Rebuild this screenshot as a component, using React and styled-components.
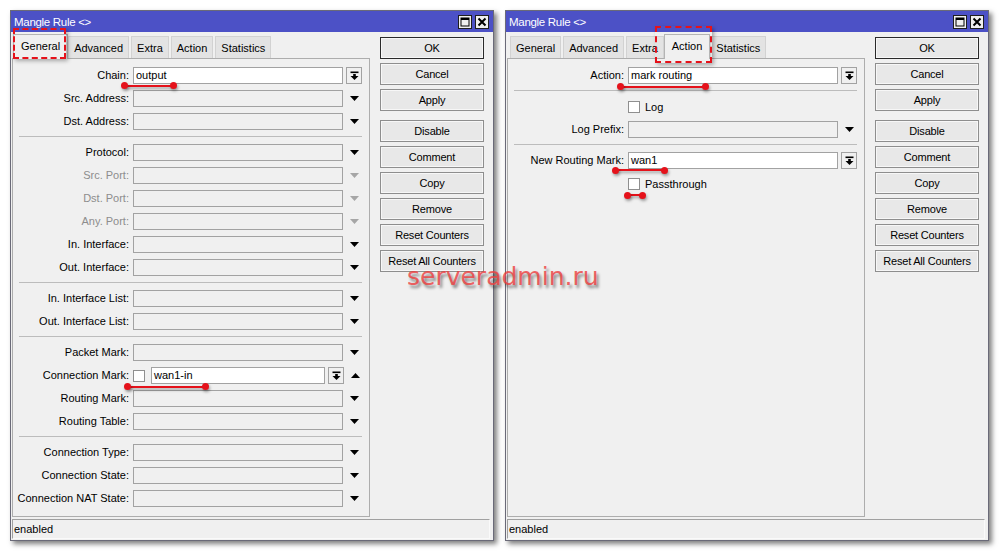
import styled, { createGlobalStyle, css } from "styled-components";

const GlobalStyle = createGlobalStyle`
  html, body {
    margin: 0;
    padding: 0;
    background: #ffffff;
  }
  body {
    font-family: "Liberation Sans", Arial, sans-serif;
    font-size: 11px;
    color: #000;
  }
`;

const Stage = styled.div`
  position: relative;
  width: 1000px;
  height: 553px;
  box-sizing: border-box;
  padding: 10px 0 0 10px;
  display: flex;
  align-items: flex-start;
  gap: 11px;
  overflow: hidden;
`;

const Window = styled.div`
  width: 484px;
  height: 531px;
  box-sizing: border-box;
  border: 1px solid #6a6a78;
  background: #f0f0f0;
  display: flex;
  flex-direction: column;
  box-shadow: 3px 3px 5px rgba(0, 0, 0, 0.5);
`;

const TitleBar = styled.div`
  flex: none;
  height: 21px;
  background: #4c51c6;
  color: #fff;
  display: flex;
  align-items: center;
  padding: 0 4px 0 3px;
`;

const TitleText = styled.span`
  flex: 1;
  font-size: 11.5px;
  letter-spacing: -0.3px;
`;

const TitleButton = styled.span`
  width: 14px;
  height: 14px;
  box-sizing: border-box;
  margin-left: 3px;
  border: 1px solid #1e1e1e;
  background: #efefef;
  display: flex;
  align-items: center;
  justify-content: center;
`;

const WindowBody = styled.div`
  flex: 1;
  min-height: 0;
  display: flex;
  padding: 0 9px 0 1px;
`;

const MainColumn = styled.div`
  width: 358px;
  display: flex;
  flex-direction: column;
`;

const TabStrip = styled.div`
  flex: none;
  height: 26px;
  display: flex;
  align-items: flex-end;
  padding-left: 3px;
  position: relative;
  z-index: 1;
`;

const Tab = styled.div`
  height: 22px;
  box-sizing: border-box;
  padding: 0 5px;
  margin-right: 2px;
  display: flex;
  align-items: center;
  justify-content: center;
  border: 1px solid #d2d2d2;
  border-bottom: none;
  background: #e3e3e3;
  white-space: nowrap;

  ${(p) =>
    p.$active &&
    css`
      height: 25px;
      margin: 0 0 -1px -2px;
      padding: 0 7px 2px;
      background: #f0f0f0;
      border-color: #b4b4b4;
      position: relative;
      z-index: 2;
    `}
`;

const Panel = styled.div`
  flex: 1;
  border: 1px solid #adadad;
  padding-top: 5px;
`;

const Row = styled.div`
  height: 23px;
  display: flex;
  align-items: center;
`;

const Label = styled.div`
  width: 116px;
  margin-right: 4px;
  text-align: right;
  white-space: nowrap;
  line-height: 14px;
  padding-bottom: 1px;
  color: ${(p) => (p.$disabled ? "#8d8d8d" : "#000")};
`;

const Field = styled.div`
  width: ${(p) => p.$width || 210}px;
  height: 17px;
  box-sizing: border-box;
  margin-left: ${(p) => p.$offset || 0}px;
  border: 1px solid #a2a2a2;
  background: ${(p) => (p.$white ? "#ffffff" : "#f0f0f0")};
  padding-left: 2px;
  line-height: 14px;
  white-space: nowrap;
`;

const Arrow = styled.svg`
  margin-left: 7px;
  flex: none;
`;

const ComboButton = styled.div`
  width: 16px;
  height: 17px;
  box-sizing: border-box;
  margin-left: 3px;
  border: 1px solid #a2a2a2;
  background: #f0f0f0;
  display: flex;
  align-items: center;
  justify-content: center;
`;

const CheckBox = styled.span`
  width: 12px;
  height: 12px;
  box-sizing: border-box;
  margin-left: ${(p) => p.$indent || 0}px;
  border: 1px solid #8f8f8f;
  background: #fff;
  flex: none;
`;

const CheckText = styled.span`
  margin-left: 5px;
`;

const Separator = styled.div`
  height: 1px;
  margin: 3px 7px 4px 6px;
  background: #bcbcbc;
`;

const ButtonColumn = styled.div`
  width: 104px;
  margin-left: 10px;
  padding-top: 5px;
  display: flex;
  flex-direction: column;
  gap: 4px;
`;

const Button = styled.div`
  height: 22px;
  box-sizing: border-box;
  border: 1px solid ${(p) => (p.$default ? "#2a2a2a" : "#8e8e8e")};
  box-shadow: inset 0 0 0 1px #f7f7f7;
  background: #e8e8e8;
  display: flex;
  align-items: center;
  justify-content: center;
  letter-spacing: -0.2px;
  margin-top: ${(p) => (p.$spaced ? 5 : 0)}px;
`;

const StatusBar = styled.div`
  flex: none;
  height: 20px;
  box-sizing: border-box;
  margin: 2px 3px 1px 1px;
  border-top: 1px solid #a0a0a0;
  border-left: 1px solid #a0a0a0;
  border-right: 1px solid #fafafa;
  border-bottom: 1px solid #fafafa;
  padding-left: 1px;
  display: flex;
  align-items: center;
`;

/* overlays: annotation marks drawn over the screenshot */
const MarkLine = styled.div`
  position: absolute;
  left: ${(p) => p.$x}px;
  top: ${(p) => p.$y - 1}px;
  width: ${(p) => p.$w}px;
  height: 2px;
  background: #e5121b;
  box-shadow: 1px 2px 3px rgba(0, 0, 0, 0.35);

  &::before,
  &::after {
    content: "";
    position: absolute;
    top: -2.5px;
    width: 7px;
    height: 7px;
    border-radius: 50%;
    background: #e5121b;
    box-shadow: 1px 2px 3px rgba(0, 0, 0, 0.35);
  }
  &::before {
    left: -3.5px;
  }
  &::after {
    right: -3.5px;
  }
`;

const DashBox = styled.div`
  position: absolute;
  left: ${(p) => p.$x}px;
  top: ${(p) => p.$y}px;
  width: ${(p) => p.$w}px;
  height: ${(p) => p.$h}px;
  box-sizing: border-box;
  border: 2px dashed #e5121b;
  box-shadow: 2px 2px 4px rgba(0, 0, 0, 0.3);
  z-index: 5;
`;

const Watermark = styled.div`
  position: absolute;
  left: 407px;
  top: 270px;
  font-family: "DejaVu Sans", Verdana, sans-serif;
  font-size: 25px;
  line-height: 14px;
  color: rgba(238, 60, 60, 0.8);
  text-shadow: 2px 3px 3px rgba(0, 0, 0, 0.45);
  z-index: 5;
`;

const DownArrow = ({ color = "#000" }) => (
  <Arrow width="9" height="5" viewBox="0 0 9 5">
    <path d="M0 0h9L4.5 5z" fill={color} />
  </Arrow>
);

const UpArrow = () => (
  <Arrow width="9" height="5" viewBox="0 0 9 5">
    <path d="M0 5h9L4.5 0z" fill="#000" />
  </Arrow>
);

const Combo = () => (
  <ComboButton>
    <svg width="9" height="10" viewBox="0 0 9 10">
      <rect x="0.5" y="0.5" width="8" height="1.6" fill="#000" />
      <rect x="3.2" y="3" width="2.6" height="2.2" fill="#000" />
      <path d="M0.5 5h8L4.5 9z" fill="#000" />
    </svg>
  </ComboButton>
);

const MaxIcon = () => (
  <svg width="10" height="10" viewBox="0 0 10 10">
    <rect x="1" y="1" width="8" height="8" fill="none" stroke="#000" strokeWidth="1" />
    <rect x="1" y="1" width="8" height="2" fill="#000" />
  </svg>
);

const CloseIcon = () => (
  <svg width="10" height="10" viewBox="0 0 10 10">
    <path d="M1.5 1.5l7 7M8.5 1.5l-7 7" stroke="#000" strokeWidth="2" />
  </svg>
);

const BUTTONS = [
  "OK",
  "Cancel",
  "Apply",
  "Disable",
  "Comment",
  "Copy",
  "Remove",
  "Reset Counters",
  "Reset All Counters",
];

const TABS = ["General", "Advanced", "Extra", "Action", "Statistics"];

const GENERAL_SECTIONS = [
  [
    { label: "Chain", value: "output", white: true, combo: true },
    { label: "Src. Address" },
    { label: "Dst. Address" },
  ],
  [
    { label: "Protocol" },
    { label: "Src. Port", disabled: true },
    { label: "Dst. Port", disabled: true },
    { label: "Any. Port", disabled: true },
    { label: "In. Interface" },
    { label: "Out. Interface" },
  ],
  [{ label: "In. Interface List" }, { label: "Out. Interface List" }],
  [
    { label: "Packet Mark" },
    { label: "Connection Mark", value: "wan1-in", negatable: true },
    { label: "Routing Mark" },
    { label: "Routing Table" },
  ],
  [
    { label: "Connection Type" },
    { label: "Connection State" },
    { label: "Connection NAT State" },
  ],
];

const FieldRow = ({ label, value, white, combo, disabled, negatable }) => (
  <Row>
    <Label $disabled={disabled}>{label}:</Label>
    {negatable ? (
      <>
        <CheckBox />
        <Field $width={174} $offset={6} $white>
          {value}
        </Field>
        <Combo />
        <UpArrow />
      </>
    ) : (
      <>
        <Field $white={white}>{value}</Field>
        {combo ? <Combo /> : <DownArrow color={disabled ? "#a6a6a6" : "#000"} />}
      </>
    )}
  </Row>
);

const CheckRow = ({ text }) => (
  <Row>
    <CheckBox $indent={120} />
    <CheckText>{text}</CheckText>
  </Row>
);

const MangleWindow = ({ activeTab, children }) => (
  <Window>
    <TitleBar>
      <TitleText>Mangle Rule &lt;&gt;</TitleText>
      <TitleButton>
        <MaxIcon />
      </TitleButton>
      <TitleButton>
        <CloseIcon />
      </TitleButton>
    </TitleBar>
    <WindowBody>
      <MainColumn>
        <TabStrip>
          {TABS.map((t) => (
            <Tab key={t} $active={t === activeTab}>
              {t}
            </Tab>
          ))}
        </TabStrip>
        <Panel>{children}</Panel>
      </MainColumn>
      <ButtonColumn>
        {BUTTONS.map((b) => (
          <Button key={b} $default={b === "OK"} $spaced={b === "Disable"}>
            {b}
          </Button>
        ))}
      </ButtonColumn>
    </WindowBody>
    <StatusBar>enabled</StatusBar>
  </Window>
);

export default function App() {
  return (
    <>
      <GlobalStyle />
      <Stage>
        <MangleWindow activeTab="General">
          {GENERAL_SECTIONS.map((section, i) => (
            <div key={i}>
              {i > 0 && <Separator />}
              {section.map((f) => (
                <FieldRow key={f.label} {...f} />
              ))}
            </div>
          ))}
        </MangleWindow>

        <MangleWindow activeTab="Action">
          <FieldRow label="Action" value="mark routing" white combo />
          <Separator />
          <CheckRow text="Log" />
          <FieldRow label="Log Prefix" />
          <Separator />
          <FieldRow label="New Routing Mark" value="wan1" white combo />
          <CheckRow text="Passthrough" />
        </MangleWindow>

        <DashBox $x={13} $y={28} $w={53} $h={31} />
        <DashBox $x={655} $y={26} $w={57} $h={37} />

        <MarkLine $x={124} $y={85.5} $w={49} />
        <MarkLine $x={127} $y={386.5} $w={78} />
        <MarkLine $x={620} $y={86.5} $w={85} />
        <MarkLine $x={615} $y={170} $w={49} />
        <MarkLine $x={627} $y={195} $w={15} />

        <Watermark>serveradmin.ru</Watermark>
      </Stage>
    </>
  );
}
